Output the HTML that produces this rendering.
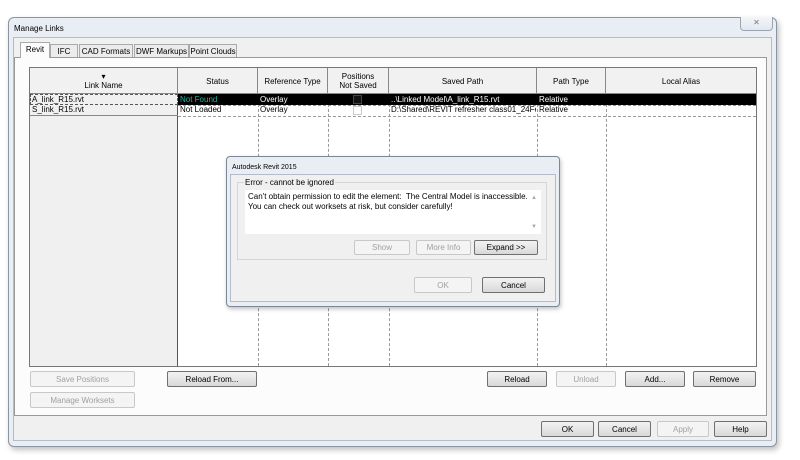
<!DOCTYPE html>
<html><head><style>
*{box-sizing:border-box;margin:0;padding:0}
body{width:800px;height:460px;background:#fff;position:relative;overflow:hidden;font-family:"Liberation Sans",sans-serif;font-size:8px;color:#000}
.a{position:absolute}
.btn{position:absolute;border:1px solid #707070;border-radius:2px;background:linear-gradient(#f2f2f2,#e6e6e6 50%,#d8d8d8);text-align:center;font-size:8px;display:flex;align-items:center;justify-content:center}
.dis{border-color:#c8c8c8;background:#f4f4f4;color:#a0a0a0}
.vl{position:absolute;border-left:1px dashed #999;top:94px;height:272px}
.hl{position:absolute;border-top:1px dashed #999;left:178px;width:578px}
.tab{position:absolute;top:44px;height:14px;border:1px solid #aaa;border-bottom:none;background:#ececec;font-size:8px;padding-top:2px;text-align:center;white-space:nowrap}
.h{position:absolute;top:68px;height:26px;border-right:1px solid #888;display:flex;align-items:center;justify-content:center;text-align:center;font-size:8px;line-height:9px}
.c{position:absolute;font-size:8px;white-space:nowrap;line-height:10px}
</style></head><body>
<div class="a" style="left:8px;top:17px;width:769px;height:430px;border:1px solid #8a94a2;border-radius:6px;background:#e9eef5;box-shadow:2px 3px 6px rgba(0,0,0,.25)"></div>
<div class="a" style="left:13px;top:37px;width:759px;height:404px;background:#f0f0f0;border:1px solid #b3bcc8"></div>
<div class="a" style="left:14px;top:24px;font-size:8px">Manage Links</div>
<div class="a" style="left:740px;top:17px;width:33px;height:14px;border:1px solid #9aa4b2;border-top:none;border-radius:0 0 4px 4px;background:linear-gradient(#f3f6fa,#e2e8ef);color:#777;font-size:8px;text-align:center;line-height:12px">✕</div>
<div class="tab" style="left:20px;top:42px;height:16px;width:30px;background:#fcfcfc;z-index:2">Revit</div>
<div class="tab" style="left:50px;width:28px">IFC</div>
<div class="tab" style="left:79px;width:54px">CAD Formats</div>
<div class="tab" style="left:134px;width:55px">DWF Markups</div>
<div class="tab" style="left:189px;width:48px">Point Clouds</div>
<div class="a" style="left:14px;top:57px;width:753px;height:359px;border:1px solid #999;background:#fcfcfc"></div>
<div class="a" style="left:29px;top:67px;width:728px;height:300px;border:1px solid #777;background:#fff"></div>
<div class="a" style="left:30px;top:68px;width:726px;height:26px;background:#f1f1f1;border-bottom:1px solid #888"></div>
<div class="a" style="left:30px;top:94px;width:148px;height:272px;background:#f0f0f0;border-right:1px solid #555"></div>
<div class="h" style="left:30px;width:148px;flex-direction:column">▾<br>Link Name</div>
<div class="h" style="left:178px;width:80px">Status</div>
<div class="h" style="left:258px;width:70px">Reference Type</div>
<div class="h" style="left:328px;width:61px">Positions<br>Not Saved</div>
<div class="h" style="left:389px;width:148px">Saved Path</div>
<div class="h" style="left:537px;width:69px">Path Type</div>
<div class="h" style="left:606px;width:150px;border-right:none">Local Alias</div>
<div class="vl" style="left:258px"></div><div class="vl" style="left:328px"></div><div class="vl" style="left:389px"></div><div class="vl" style="left:537px"></div><div class="vl" style="left:606px"></div>
<div class="a" style="left:178px;top:94px;width:578px;height:11px;background:#000"></div>
<div class="hl" style="top:105px"></div><div class="hl" style="top:116px"></div>
<div class="a" style="left:30px;top:94px;width:148px;height:11px;border:1px dashed #555;background:#f0f0f0"></div>
<div class="a" style="left:30px;top:105px;width:148px;height:11px;border-bottom:1px solid #888"></div>
<div class="c" style="left:32px;top:95px">A_link_R15.rvt</div>
<div class="c" style="left:32px;top:105px">S_link_R15.rvt</div>
<div class="c" style="left:180px;top:95px;color:#1fb3a0">Not Found</div>
<div class="c" style="left:180px;top:105px">Not Loaded</div>
<div class="c" style="left:260px;top:95px;color:#fff">Overlay</div>
<div class="c" style="left:260px;top:105px">Overlay</div>
<div class="a" style="left:353px;top:95px;width:9px;height:9px;border:1px solid #444;background:#111"></div>
<div class="a" style="left:353px;top:106px;width:9px;height:9px;border:1px solid #ccc"></div>
<div class="c" style="left:391px;top:95px;color:#fff">..\Linked Model\A_link_R15.rvt</div>
<div class="c" style="left:391px;top:105px;width:145px;overflow:hidden">D:\Shared\REVIT refresher class01_24Fe</div>
<div class="c" style="left:539px;top:95px;color:#fff">Relative</div>
<div class="c" style="left:539px;top:105px">Relative</div>
<div class="btn dis" style="left:30px;top:371px;width:105px;height:16px">Save Positions</div>
<div class="btn dis" style="left:30px;top:392px;width:105px;height:16px">Manage Worksets</div>
<div class="btn" style="left:167px;top:371px;width:90px;height:16px">Reload From...</div>
<div class="btn" style="left:487px;top:371px;width:60px;height:16px">Reload</div>
<div class="btn dis" style="left:556px;top:371px;width:60px;height:16px">Unload</div>
<div class="btn" style="left:625px;top:371px;width:60px;height:16px">Add...</div>
<div class="btn" style="left:693px;top:371px;width:63px;height:16px">Remove</div>
<div class="btn" style="left:541px;top:421px;width:53px;height:16px">OK</div>
<div class="btn" style="left:598px;top:421px;width:53px;height:16px">Cancel</div>
<div class="btn dis" style="left:657px;top:421px;width:52px;height:16px">Apply</div>
<div class="btn" style="left:714px;top:421px;width:53px;height:16px">Help</div>
<div class="a" style="left:226px;top:156px;width:334px;height:151px;border:1px solid #7c8796;border-radius:4px;background:#e9eef5;box-shadow:1px 2px 4px rgba(0,0,0,.25)"></div>
<div class="a" style="left:230px;top:174px;width:326px;height:128px;background:#f0f0f0;border:1px solid #b3bcc8"></div>
<div class="c" style="left:232px;top:163px;font-size:7px">Autodesk Revit 2015</div>
<div class="a" style="left:237px;top:182px;width:310px;height:78px;border:1px solid #d5d5d5"></div>
<div class="c" style="left:244px;top:178px;background:#f0f0f0;padding:0 1px">Error - cannot be ignored</div>
<div class="a" style="left:245px;top:190px;width:296px;height:44px;background:#fff"></div>
<div class="c" style="left:248px;top:192px;line-height:10px">Can't obtain permission to edit the element:&nbsp; The Central Model is inaccessible.<br>You can check out worksets at risk, but consider carefully!</div>
<div class="c" style="left:531px;top:193px;color:#aaa;font-size:6px">▲</div>
<div class="c" style="left:531px;top:222px;color:#aaa;font-size:6px">▼</div>
<div class="btn dis" style="left:354px;top:240px;width:56px;height:15px">Show</div>
<div class="btn dis" style="left:416px;top:240px;width:55px;height:15px">More Info</div>
<div class="btn" style="left:474px;top:240px;width:64px;height:15px">Expand &gt;&gt;</div>
<div class="btn dis" style="left:414px;top:277px;width:58px;height:16px">OK</div>
<div class="btn" style="left:482px;top:277px;width:63px;height:16px">Cancel</div>
</body></html>
